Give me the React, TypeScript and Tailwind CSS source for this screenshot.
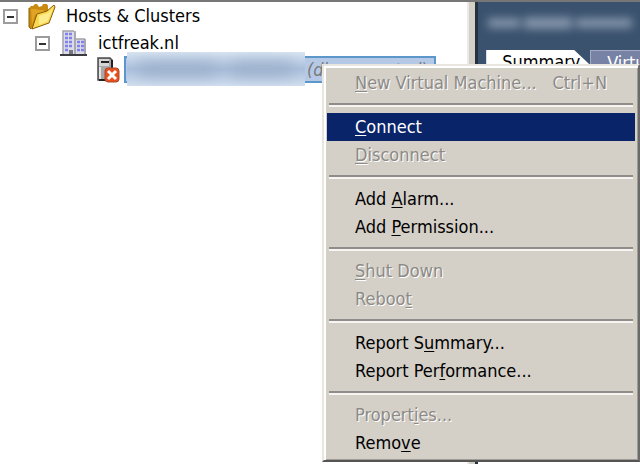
import { Fragment } from 'react';
import clsx from 'clsx';

interface MenuItem {
  label: string;
  // index of the underlined access key
  accessKey: number;
  shortcut?: string;
  disabled?: boolean;
  active?: boolean;
}

const menuGroups: MenuItem[][] = [
  [{ label: 'New Virtual Machine...', accessKey: 0, shortcut: 'Ctrl+N', disabled: true }],
  [
    { label: 'Connect', accessKey: 0, active: true },
    { label: 'Disconnect', accessKey: 0, disabled: true },
  ],
  [
    { label: 'Add Alarm...', accessKey: 4 },
    { label: 'Add Permission...', accessKey: 4 },
  ],
  [
    { label: 'Shut Down', accessKey: 0, disabled: true },
    { label: 'Reboot', accessKey: 5, disabled: true },
  ],
  [
    { label: 'Report Summary...', accessKey: 8 },
    { label: 'Report Performance...', accessKey: 10 },
  ],
  [
    { label: 'Properties...', accessKey: 7, disabled: true },
    { label: 'Remove', accessKey: 4 },
  ],
];

function FolderIcon() {
  return (
    <svg viewBox="0 0 28 28" className="w-7 h-7 shrink-0" aria-hidden="true">
      <path d="M1 6 3 4h2l2-2h2l2 3 3-1 1-2h4l1 2v10L9 25l-6 2-2-2z" fill="#c98a12" />
      <path d="M3 7h5l2 1h6v4L7 13 4 23z" fill="#e0a323" />
      <path d="M1 6v19l2 2" fill="none" stroke="#8a5c0c" />
      <path d="m9 12 10-3 7-6 1 2-6 16L4 27z" fill="#fbd94f" stroke="#8a5c0c" />
      <path d="m11 14 9-3 5-5-5 13-9 4z" fill="#fdec8e" />
    </svg>
  );
}

function DatacenterIcon() {
  return (
    <svg viewBox="0 0 28 28" className="w-7 h-7 shrink-0" aria-hidden="true">
      <path d="M3 2h11l2 2v22H3z" fill="#dcdce6" />
      <path d="M14 10h10l2 1v15H14z" fill="#dcdce6" />
      <path d="M3 26V2h11M16 10h9" fill="none" stroke="#a2a2ac" strokeWidth="1.5" />
      <path d="M15 2v24M25 10v16" stroke="#96969e" strokeWidth="1.5" />
      <path
        d="M5 5h8M5 9h8M5 13h8M5 17h8M5 21h3M17 13h7M17 17h7M17 21h7"
        stroke="#8280ee"
        strokeWidth="2.5"
        strokeDasharray="3 1"
      />
      <path d="M9 21h4v5H9z" fill="#77777f" />
      <path d="M0 26h27" stroke="#3c3c40" strokeWidth="2" />
    </svg>
  );
}

function HostIcon() {
  return (
    <svg viewBox="0 0 24 26" className="w-6 h-[26px] shrink-0" aria-hidden="true">
      <path d="M2 1h12l2 2v20H2z" fill="#a9a9a9" stroke="#4a4a4a" strokeWidth="1.5" />
      <path d="M16 3v20H3" fill="none" stroke="#222" strokeWidth="2" />
      <path d="M3 2h10v7H3z" fill="#d6d6d6" />
      <path d="M5 5h8" stroke="#222" strokeWidth="2" />
      <path d="M3 10h2v12H3z" fill="#e4e4e4" />
      <rect x="9" y="11" width="14" height="14" rx="3" fill="#e8501f" stroke="#a84a2c" />
      <path d="m12 14 8 8m0-8-8 8" stroke="#fff" strokeWidth="3" />
    </svg>
  );
}

function Toggle({ label }: { label: string }) {
  return (
    <button
      aria-label={`Collapse ${label}`}
      aria-expanded="true"
      className="w-[15px] h-[15px] mt-0.5 shrink-0 flex items-center justify-center border-2 border-[#9c9c9c] bg-white"
    >
      <span className="w-[7px] h-0.5 bg-[#333]" />
    </button>
  );
}

function InventoryTree() {
  return (
    <ul className="whitespace-nowrap">
      <li className="flex items-center h-[27px] pl-[3px]">
        <Toggle label="Hosts & Clusters" />
        <span className="flex items-center gap-2.5 ml-2.5">
          <FolderIcon />
          Hosts &amp; Clusters
        </span>
      </li>
      <li className="flex items-center h-[27px] pl-[35px]">
        <Toggle label="ictfreak.nl" />
        <span className="flex items-center gap-2.5 ml-2.5">
          <DatacenterIcon />
          ictfreak.nl
        </span>
      </li>
      <li className="flex items-center h-[27px] pl-24 gap-1">
        <HostIcon />
        <span className="relative flex items-center w-[312px] h-[27px] border-2 border-[#5b97cb] bg-[#b5c9e7]">
          <span className="absolute left-px -top-1.5 w-[178px] h-[34px] overflow-hidden bg-linear-to-b from-[#d9e5f2] via-[#abc0dd] to-[#d3e0f0]">
            <span className="flex items-center gap-3 h-full px-3 blur-sm">
              <span className="w-20 h-3 bg-[#98abc6]" />
              <span className="w-16 h-3 bg-[#98abc6]" />
            </span>
          </span>
          <span className="pl-[181px] italic text-[#7a7a7a]">(disconnected)</span>
        </span>
      </li>
    </ul>
  );
}

function DetailsPanel() {
  return (
    <section className="flex flex-col flex-1 min-w-0 overflow-hidden border-l-3 border-[#26313f] bg-white">
      <div className="bg-[#3b526e]">
        <div className="flex items-center gap-1 h-12 pl-2.5 pb-1.5 blur-xs">
          <span className="w-8 h-2.5 bg-[#8193a8]" />
          <span className="w-12 h-3 bg-[#8193a8]" />
          <span className="w-14 h-2.5 bg-[#8193a8]" />
        </div>
        <div className="flex pl-2 whitespace-nowrap">
          <button className="w-[104px] h-6 pl-4 shrink-0 text-left bg-white text-black [clip-path:polygon(0_0,88px_0,100%_15px,100%_100%,0_100%)]">
            Summary
          </button>
          <button className="h-6 pl-4 pr-3 shrink-0 text-left border-t border-l border-[#a5adc6] bg-[#7882a4] text-white">
            Virtual Machines
          </button>
        </div>
      </div>
    </section>
  );
}

function ContextMenu() {
  return (
    <div
      role="menu"
      className="absolute left-[322px] right-0 top-[62px] p-[3px] border-2 border-t-[#e9e6df] border-l-[#e9e6df] border-r-[#6b6b6b] border-b-[#555] bg-[#d4cfc7] shadow-[inset_2px_2px_0_#fff,inset_-1px_-1px_0_#a09c95]"
    >
      {menuGroups.map((group, i) => (
        <Fragment key={i}>
          {i > 0 && (
            <div role="separator" className="h-4 px-0.5 pt-1.5">
              <div className="h-1 border-t-2 border-b-2 border-t-[#8e8d8a] border-b-[#f6f5f3]" />
            </div>
          )}
          {group.map(item => (
            <button
              key={item.label}
              role="menuitem"
              disabled={item.disabled}
              className={clsx(
                'flex items-center w-full h-7 pl-7 pr-7 text-left whitespace-nowrap',
                item.active && 'bg-[#0a246a] text-white',
                item.disabled && 'text-[#8c8a86] [text-shadow:1px_1px_0_#fff]',
              )}
            >
              <span>
                {item.label.slice(0, item.accessKey)}
                <span className="underline underline-offset-2">{item.label[item.accessKey]}</span>
                {item.label.slice(item.accessKey + 1)}
              </span>
              {item.shortcut && <span className="ml-auto">{item.shortcut}</span>}
            </button>
          ))}
        </Fragment>
      ))}
    </div>
  );
}

export default function App() {
  return (
    <div className="relative flex min-h-screen overflow-hidden border-t-2 border-[#777] bg-white text-black text-[18px] leading-5 font-['DejaVu_Sans_Condensed','Noto_Sans',sans-serif]">
      <nav aria-label="Inventory" className="w-[73%] shrink-0">
        <InventoryTree />
      </nav>
      <div className="w-2 shrink-0 border-l-2 border-[#eceae5] bg-[#d4cfc7]" />
      <DetailsPanel />
      <ContextMenu />
    </div>
  );
}
